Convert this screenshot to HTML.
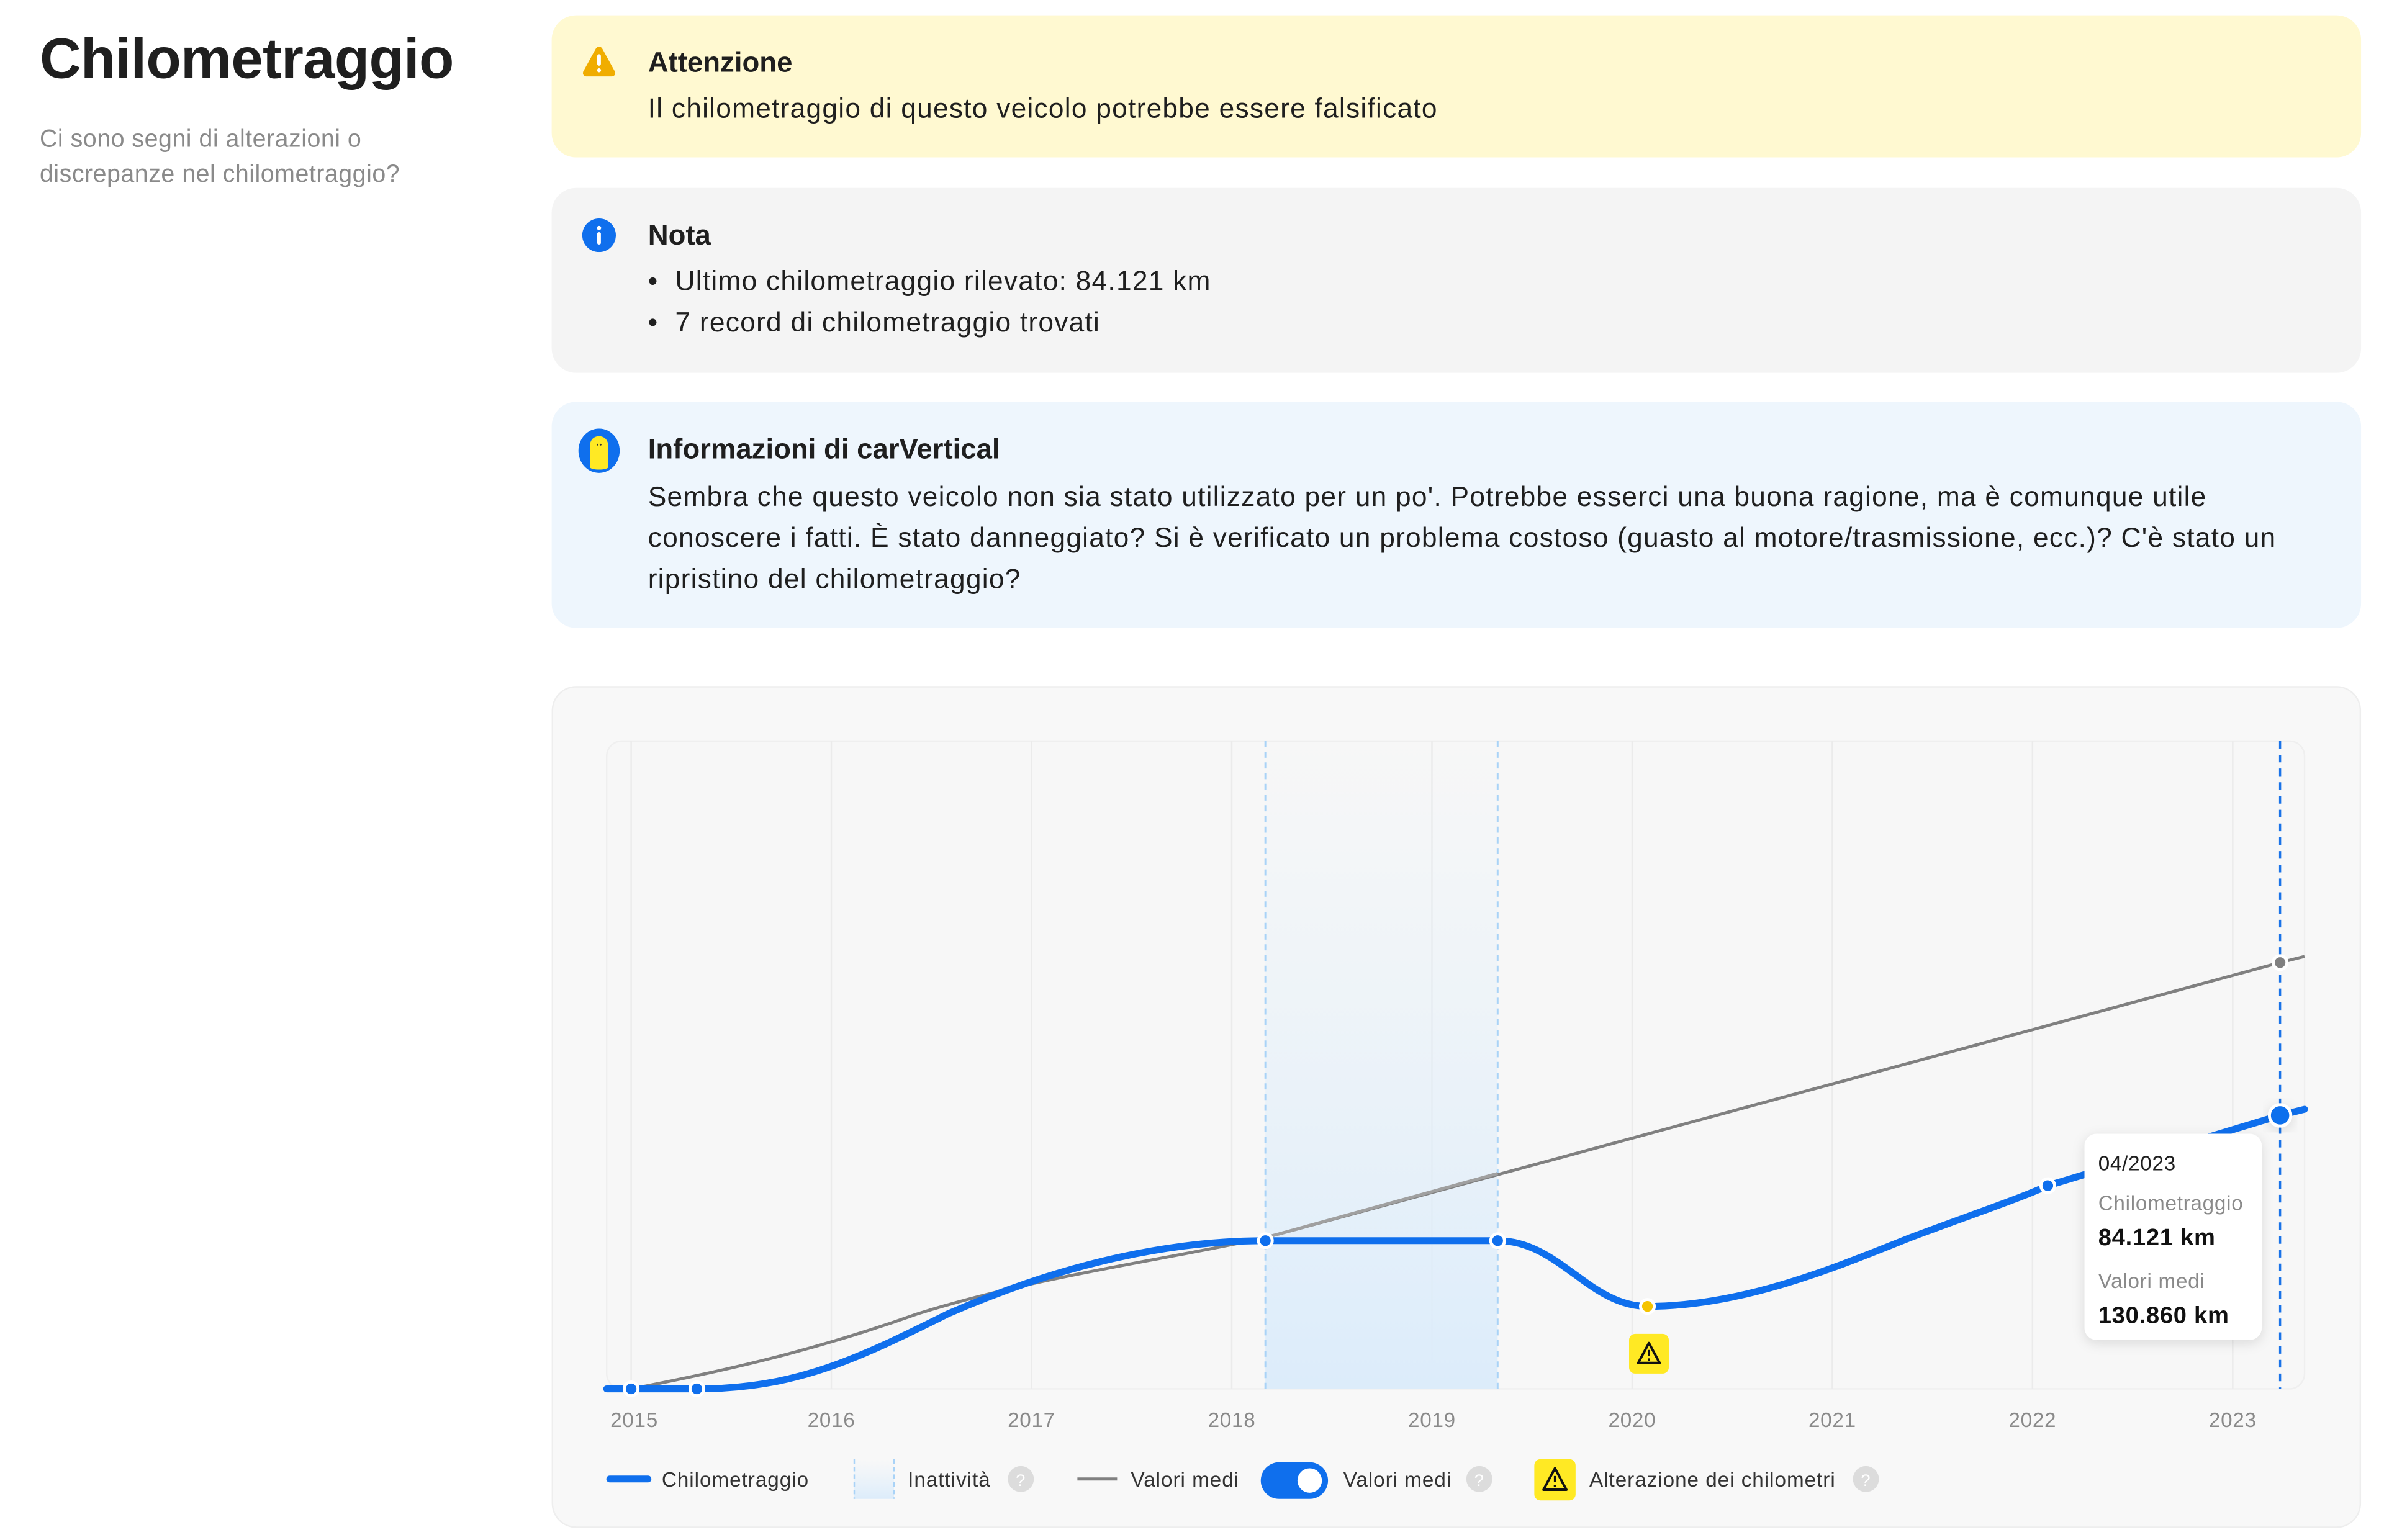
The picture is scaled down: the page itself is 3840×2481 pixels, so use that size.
<!DOCTYPE html>
<html><head><meta charset="utf-8">
<style>
html,body{margin:0;padding:0;background:#fff;width:3840px;height:2481px;overflow:hidden}
#w{position:absolute;left:0;top:0;width:1560px;height:1008px;transform:scale(2.461538);transform-origin:0 0;font-family:"Liberation Sans",sans-serif;color:#1f1f1f}
.a{position:absolute;white-space:nowrap}
.card{position:absolute;left:361px;width:1184px;border-radius:16px}
.h{font-weight:bold;font-size:18.5px}
.t{font-size:18px;letter-spacing:0.5px}
</style></head><body><div id="w">
<div class="a" style="left:26px;top:17px;font-size:37.5px;font-weight:bold;letter-spacing:-0.3px">Chilometraggio</div>
<div class="a" style="left:26px;top:80px;font-size:16px;letter-spacing:0.2px;line-height:23px;color:#8a8a8a">Ci sono segni di alterazioni o<br>discrepanze nel chilometraggio?</div>

<div class="card" style="top:10px;height:93px;background:#fff9d1"></div>
<svg class="a" style="left:380px;top:29px" width="24" height="22" viewBox="0 0 24 22"><path d="M12 1.5c1 0 1.6.5 2.2 1.5l8 14.5c.9 1.7 0 3.5-2 3.5H3.8c-2 0-2.9-1.8-2-3.5l8-14.5C10.4 2 11 1.5 12 1.5z" fill="#f0ad00"/><rect x="10.8" y="6.5" width="2.4" height="7.5" rx="1.2" fill="#fff"/><circle cx="12" cy="17" r="1.3" fill="#fff"/></svg>
<div class="a h" style="left:424px;top:30px">Attenzione</div>
<div class="a t" style="left:424px;top:61px">Il chilometraggio di questo veicolo potrebbe essere falsificato</div>

<div class="card" style="top:123px;height:121px;background:#f4f4f4"></div>
<svg class="a" style="left:381px;top:143px" width="22" height="22"><circle cx="11" cy="11" r="11" fill="#0f6fed"/><rect x="9.8" y="9" width="2.4" height="8" rx="1" fill="#fff"/><circle cx="11" cy="6.2" r="1.4" fill="#fff"/></svg>
<div class="a h" style="left:424px;top:143px">Nota</div>
<div class="a t" style="left:424px;top:174px">•&nbsp; Ultimo chilometraggio rilevato: 84.121 km</div>
<div class="a t" style="left:424px;top:201px">•&nbsp; 7 record di chilometraggio trovati</div>

<div class="card" style="top:263px;height:148px;background:#eef6fd"></div>
<svg class="a" style="left:378px;top:280px" width="28" height="30"><ellipse cx="14" cy="15" rx="13.5" ry="14.5" fill="#0f6fed"/><path d="M8 26V12c0-4 2.5-6.5 6-6.5s6 2.5 6 6.5v14c-2 1.8-10 1.8-12 0z" fill="#ffe924"/><circle cx="13" cy="11" r=".6" fill="#333"/><circle cx="15" cy="11" r=".6" fill="#333"/></svg>
<div class="a h" style="left:424px;top:283px">Informazioni di carVertical</div>
<div class="a t" style="left:424px;top:312px;line-height:27px">Sembra che questo veicolo non sia stato utilizzato per un po'. Potrebbe esserci una buona ragione, ma è comunque utile<br>conoscere i fatti. È stato danneggiato? Si è verificato un problema costoso (guasto al motore/trasmissione, ecc.)? C'è stato un<br>ripristino del chilometraggio?</div>

<div class="card" style="top:449px;height:551px;background:#f8f8f8;border:1px solid #eeeeee;box-sizing:border-box"></div>
<svg class="a" style="left:0;top:0" width="1560" height="1008" viewBox="0 0 1560 1008" font-family="Liberation Sans, sans-serif">
<defs><linearGradient id="g" x1="0" y1="0" x2="0" y2="1"><stop offset="0" stop-color="#e3f0fb" stop-opacity="0"/><stop offset="1" stop-color="#dcecfa"/></linearGradient>
<filter id="sh" x="-30%" y="-30%" width="160%" height="160%"><feDropShadow dx="0" dy="2" stdDeviation="4" flood-opacity="0.12"/></filter></defs>
<rect x="397" y="485" width="1111" height="424" rx="10" fill="#f7f7f7" stroke="#efefef"/>
<g stroke="#ebebeb" stroke-width="1">
<line x1="413" y1="485" x2="413" y2="909"/><line x1="544" y1="485" x2="544" y2="909"/><line x1="675" y1="485" x2="675" y2="909"/><line x1="806" y1="485" x2="806" y2="909"/><line x1="937" y1="485" x2="937" y2="909"/><line x1="1068" y1="485" x2="1068" y2="909"/><line x1="1199" y1="485" x2="1199" y2="909"/><line x1="1330" y1="485" x2="1330" y2="909"/><line x1="1461" y1="485" x2="1461" y2="909"/></g>
<rect x="828" y="485" width="152" height="424" fill="url(#g)"/>
<g stroke="#a9d3f7" stroke-width="1.2" stroke-dasharray="4 3"><line x1="828" y1="485" x2="828" y2="909"/><line x1="980" y1="485" x2="980" y2="909"/></g>
<line x1="1492" y1="485" x2="1492" y2="909" stroke="#1a73e8" stroke-width="1.4" stroke-dasharray="5 4"/>
<path d="M413 909 C470 898 530 885 600 860 C680 835 760 825 828 810 L1492 630 L1508 626" fill="none" stroke="#808080" stroke-width="2"/>
<path d="M828 810 L980 768" stroke="#a0a0a0" stroke-width="2"/>
<path d="M397 909 L456 909 C520 909 560 890 620 860 C700 825 770 812 828 812 L980 812 C1020 812 1040 855 1078 855 C1140 855 1200 830 1250 810 C1290 795 1320 785 1340 776 L1492 730 L1508 726" fill="none" stroke="#0f6fed" stroke-width="4.5" stroke-linecap="round"/>
<circle cx="1492" cy="630" r="4.5" fill="#808080" stroke="#fff" stroke-width="2"/>
<g fill="#0f6fed" stroke="#fff" stroke-width="2"><circle cx="413" cy="909" r="4.5"/><circle cx="456" cy="909" r="4.5"/><circle cx="828" cy="812" r="4.5"/><circle cx="980" cy="812" r="4.5"/><circle cx="1340" cy="776" r="4.5"/><circle cx="1492" cy="730" r="7" filter="url(#sh)"/></g>
<circle cx="1078" cy="855" r="4.5" fill="#f5c400" stroke="#fff" stroke-width="2"/>
<rect x="1066" y="873" width="26" height="26" rx="4" fill="#ffe924"/>
<path d="M1079 879 L1086 892 H1072 Z" fill="none" stroke="#111" stroke-width="1.6" stroke-linejoin="round"/><line x1="1079" y1="883.5" x2="1079" y2="887.5" stroke="#111" stroke-width="1.4"/><circle cx="1079" cy="889.8" r=".8" fill="#111"/>
<rect x="1364" y="742" width="116" height="135" rx="8" fill="#fff" filter="url(#sh)"/>
<g letter-spacing="0.3">
<text x="1373" y="766" font-size="13.5" fill="#1f1f1f">04/2023</text>
<text x="1373" y="792" font-size="13.5" fill="#8a8a8a">Chilometraggio</text>
<text x="1373" y="815" font-size="15.5" font-weight="bold" fill="#111">84.121 km</text>
<text x="1373" y="843" font-size="13.5" fill="#8a8a8a">Valori medi</text>
<text x="1373" y="866" font-size="15.5" font-weight="bold" fill="#111">130.860 km</text></g>
<g font-size="13.5" fill="#8a8a8a" text-anchor="middle" letter-spacing="0.3"><text x="415" y="934">2015</text><text x="544" y="934">2016</text><text x="675" y="934">2017</text><text x="806" y="934">2018</text><text x="937" y="934">2019</text><text x="1068" y="934">2020</text><text x="1199" y="934">2021</text><text x="1330" y="934">2022</text><text x="1461" y="934">2023</text></g>
<g font-size="13.5" fill="#333" letter-spacing="0.4">
<line x1="399" y1="968" x2="424" y2="968" stroke="#0f6fed" stroke-width="4.5" stroke-linecap="round"/>
<text x="433" y="973">Chilometraggio</text>
<rect x="559" y="955" width="26" height="26" fill="url(#g)"/><g stroke="#a9d3f7" stroke-dasharray="3 2"><line x1="559" y1="955" x2="559" y2="981"/><line x1="585" y1="955" x2="585" y2="981"/></g>
<text x="594" y="973">Inattività</text>
<circle cx="668" cy="968" r="8.5" fill="#dcdcdc"/><text x="668" y="972.5" font-size="11" fill="#fff" text-anchor="middle">?</text>
<line x1="705" y1="968" x2="731" y2="968" stroke="#808080" stroke-width="2"/>
<text x="740" y="973">Valori medi</text>
<rect x="825" y="957" width="44" height="24" rx="12" fill="#0f6fed"/><circle cx="857" cy="969" r="8" fill="#fff"/>
<text x="879" y="973">Valori medi</text>
<circle cx="968" cy="968" r="8.5" fill="#dcdcdc"/><text x="968" y="972.5" font-size="11" fill="#fff" text-anchor="middle">?</text>
<rect x="1004" y="955" width="27" height="27" rx="4" fill="#ffe924"/>
<path d="M1017.5 961 L1025 975 H1010 Z" fill="none" stroke="#111" stroke-width="1.6" stroke-linejoin="round"/><line x1="1017.5" y1="966" x2="1017.5" y2="970" stroke="#111" stroke-width="1.4"/><circle cx="1017.5" cy="972.5" r=".8" fill="#111"/>
<text x="1040" y="973">Alterazione dei chilometri</text>
<circle cx="1221" cy="968" r="8.5" fill="#dcdcdc"/><text x="1221" y="972.5" font-size="11" fill="#fff" text-anchor="middle">?</text>
</g>
</svg>
</div></body></html>
